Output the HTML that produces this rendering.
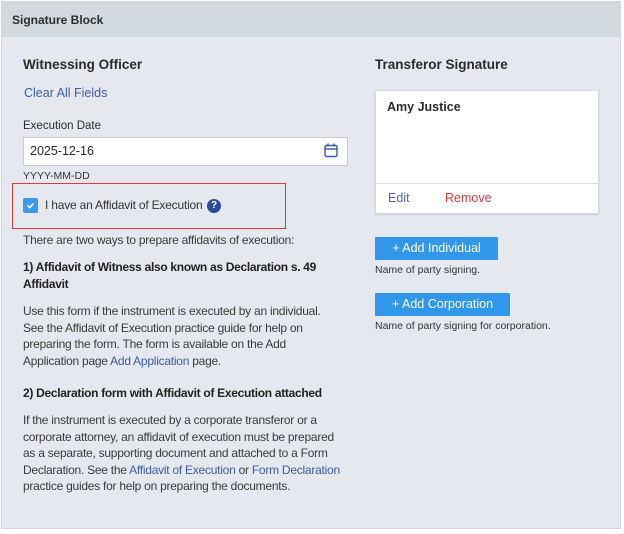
<!DOCTYPE html>
<html><head><style>
*{margin:0;padding:0;box-sizing:border-box}
body{width:624px;height:534px;background:#fff;font-family:"Liberation Sans",sans-serif;color:#2b2b2b;position:relative;overflow:hidden}
.panel{position:absolute;left:1px;top:1px;width:620px;height:528px;background:#e5e9ef;border:1px solid #d0d6dc}
.hdr{position:absolute;left:0;top:0;width:100%;height:35px;background:#d2d9df;font-weight:bold;font-size:12px;padding:11px 10px;color:#2d2d2d}
.a{position:absolute;white-space:nowrap}
.h{font-weight:bold;font-size:13.5px}
.lnk{color:#3b5ba5}
.p{font-size:12px;line-height:16.5px;color:#3a3a3a;letter-spacing:-0.25px}
.b{font-weight:bold;font-size:12px;line-height:16.5px;color:#222;letter-spacing:-0.3px}
.btn{position:absolute;background:#3097ea;color:#fff;font-size:12.5px;text-align:center;line-height:22px;border-radius:1px}
.s{font-size:10.5px;color:#333}
</style></head><body>
<div class="panel">
<div class="hdr">Signature Block</div>
</div>
<div class="a h" style="left:23px;top:57px">Witnessing Officer</div>
<div class="a lnk" style="left:24px;top:86px;font-size:12.5px">Clear All Fields</div>
<div class="a" style="left:23px;top:120px;font-size:11.5px">Execution Date</div>
<div class="a" style="left:23px;top:137px;width:325px;height:29px;background:#fff;border:1px solid #c8ccd0"></div>
<div class="a" style="left:30px;top:144px;font-size:12.5px">2025-12-16</div>
<svg class="a" style="left:324px;top:143px" width="14" height="15" viewBox="0 0 14 15"><rect x="1" y="2.5" width="12" height="11" rx="1.5" fill="none" stroke="#3b5ba5" stroke-width="1.4"/><line x1="1" y1="6" x2="13" y2="6" stroke="#3b5ba5" stroke-width="1.4"/><line x1="4" y1="0.5" x2="4" y2="3.5" stroke="#3b5ba5" stroke-width="1.4"/><line x1="10" y1="0.5" x2="10" y2="3.5" stroke="#3b5ba5" stroke-width="1.4"/></svg>
<div class="a" style="left:23px;top:170px;font-size:10.5px;color:#333">YYYY-MM-DD</div>
<div class="a" style="left:12px;top:183px;width:274px;height:46px;border:1.5px solid #e0393c"></div>
<div class="a" style="left:23px;top:198px;width:15px;height:15px;background:#3a9be6;border-radius:2px"></div>
<svg class="a" style="left:25px;top:200px" width="11" height="11" viewBox="0 0 11 11"><path d="M2.5 5.5 L4.7 7.6 L8.5 3.5" fill="none" stroke="#fff" stroke-width="1.6"/></svg>
<div class="a" style="left:45px;top:198px;font-size:12px;color:#333;letter-spacing:-0.2px">I have an Affidavit of Execution</div>
<div class="a" style="left:207px;top:199px;width:14px;height:14px;border-radius:50%;background:#2c4c9c;color:#fff;font-size:10px;font-weight:bold;text-align:center;line-height:14px">?</div>
<div class="a p" style="left:23px;top:232px">There are two ways to prepare affidavits of execution:</div>
<div class="a b" style="left:23px;top:259px">1) Affidavit of Witness also known as Declaration s. 49<br>Affidavit</div>
<div class="a p" style="left:23px;top:303px">Use this form if the instrument is executed by an individual.<br>See the Affidavit of Execution practice guide for help on<br>preparing the form. The form is available on the Add<br>Application page <span class="lnk">Add Application</span> page.</div>
<div class="a b" style="left:23px;top:385px">2) Declaration form with Affidavit of Execution attached</div>
<div class="a p" style="left:23px;top:412px">If the instrument is executed by a corporate transferor or a<br>corporate attorney, an affidavit of execution must be prepared<br>as a separate, supporting document and attached to a Form<br>Declaration. See the <span class="lnk">Affidavit of Execution</span> or <span class="lnk">Form Declaration</span><br>practice guides for help on preparing the documents.</div>

<div class="a h" style="left:375px;top:57px">Transferor Signature</div>
<div class="a" style="left:375px;top:90px;width:224px;height:124px;background:#fff;border:1px solid #d5dade;box-shadow:0 1px 2px rgba(0,0,0,.12)"></div>
<div class="a" style="left:375px;top:183px;width:224px;height:1px;background:#d8dde2"></div>
<div class="a" style="left:387px;top:100px;font-weight:bold;font-size:12.5px">Amy Justice</div>
<div class="a lnk" style="left:388px;top:191px;font-size:12.5px;color:#5566a0">Edit</div>
<div class="a" style="left:445px;top:191px;font-size:12.5px;color:#d8393a">Remove</div>
<div class="btn" style="left:375px;top:237px;width:123px;height:23px">+ Add Individual</div>
<div class="a s" style="left:375px;top:264px">Name of party signing.</div>
<div class="btn" style="left:375px;top:293px;width:135px;height:23px">+ Add Corporation</div>
<div class="a s" style="left:375px;top:320px">Name of party signing for corporation.</div>
</body></html>
